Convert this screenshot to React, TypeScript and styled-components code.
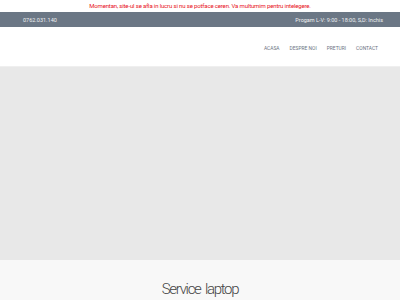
import React from "react";
import styled, { createGlobalStyle } from "styled-components";

const GlobalStyle = createGlobalStyle`
  html, body {
    margin: 0;
    padding: 0;
    background: #ffffff;
    font-family: Roboto, "Liberation Sans", sans-serif;
  }
`;

const navItems = ["ACASA", "DESPRE NOI", "PRETURI", "CONTACT"];

const Notice = styled.div`
  height: 12px;
  line-height: 12px;
  text-align: center;
  color: #e8101a;
  font-size: 6px;
  letter-spacing: -0.15px;
`;

const TopBar = styled.div`
  height: 15px;
  background: #6b7785;
  color: #eef0f2;
  font-size: 5.5px;
  display: flex;
  align-items: center;
  justify-content: space-between;
  padding: 0 17px 0 23px;
`;

const Header = styled.header`
  height: 39px;
  display: flex;
  align-items: center;
  justify-content: flex-end;
  padding: 0 22px 0 23px;
  border-bottom: 1px solid #efefef;
`;

const Nav = styled.nav`
  display: flex;
  gap: 10px;
  padding-top: 2px;
`;

const NavLink = styled.a`
  color: #6a7280;
  font-size: 4.9px;
  text-decoration: none;
`;

const Hero = styled.section`
  height: 193px;
  background: #e8e8e8;
`;

const Services = styled.section`
  background: #f8f8f8;
  height: 41px;
  display: flex;
  justify-content: center;
  padding-top: 19px;
  box-sizing: border-box;
`;

const Heading = styled.h2`
  margin: 0;
  font-weight: 300;
  font-size: 15px;
  line-height: 20px;
  letter-spacing: -1.3px;
  word-spacing: 2px;
  color: #444;
`;

export default function App() {
  return (
    <>
      <GlobalStyle />
      <Notice>
        Momentan, site-ul se afla in lucru si nu se potface ceren. Va multumim pentru intelegere.
      </Notice>
      <TopBar>
        <span>0762.031.140</span>
        <span>Progam L-V: 9:00 - 18:00, S,D: Inchis</span>
      </TopBar>
      <Header>
        <Nav>
          {navItems.map((item) => (
            <NavLink key={item} href="#">
              {item}
            </NavLink>
          ))}
        </Nav>
      </Header>
      <Hero />
      <Services>
        <Heading>Service laptop</Heading>
      </Services>
    </>
  );
}
